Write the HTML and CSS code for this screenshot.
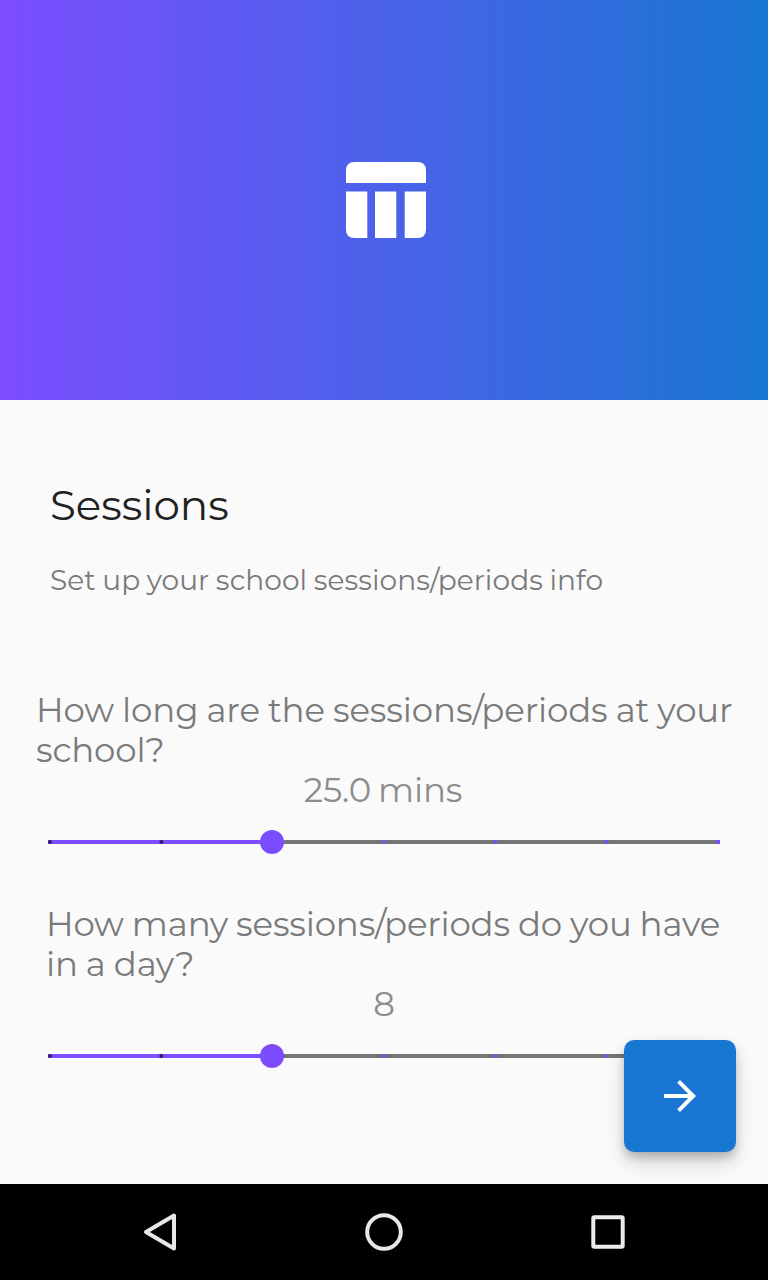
FILE: index.html
```html
<!DOCTYPE html>
<html lang="en">
<head>
<meta charset="utf-8">
<title>Sessions</title>
<link rel="stylesheet" href="styles.css">
</head>
<body>
<div class="screen">
  <header class="hero">
    <svg class="hero-icon" width="80" height="76" viewBox="0 0 80 76" fill="#fff">
      <path d="M8.500 0H71.500Q80 0 80 8.500V21H0V8.500Q0 0 8.500 0Z"/>
      <path d="M0 29.500H21.300V76H8.500Q0 76 0 67.500Z"/>
      <path d="M29 29.500H50.300V76H29Z"/>
      <path d="M58.700 29.500H80V67.500Q80 76 71.500 76H58.700Z"/>
    </svg>
  </header>
  <main class="content">
    <h1 class="title">Sessions</h1>
    <p class="subtitle">Set up your school sessions/periods info</p>
    <section class="question question-length">
      <p class="prompt">How long are the sessions/periods at your<br>school?</p>
      <p class="value value-length">25.0 mins</p>
      <svg class="slider" width="672" height="24" viewBox="0 0 672 24">
        <path fill="#757575" d="M224 10H672V14H224Z"/><path fill="#7c4dff" d="M0 10H224V14H0Z"/>
        <g fill="#311f66"><circle cx="2" cy="12" r="2"/><circle cx="113.300" cy="12" r="2"/></g>
        <g fill="#7c4dff"><circle cx="224" cy="12" r="12"/><circle cx="336" cy="12" r="2"/><circle cx="447.300" cy="12" r="2"/><circle cx="558.600" cy="12" r="2"/><path d="M668 10H672V14H668Z"/></g>
      </svg>
    </section>
    <section class="question question-count">
      <p class="prompt">How many sessions/periods do you have<br>in a day?</p>
      <p class="value">8</p>
      <svg class="slider" width="672" height="24" viewBox="0 0 672 24">
        <path fill="#757575" d="M224 10H672V14H224Z"/><path fill="#7c4dff" d="M0 10H224V14H0Z"/>
        <g fill="#311f66"><circle cx="2" cy="12" r="2"/><circle cx="113.300" cy="12" r="2"/></g>
        <g fill="#7c4dff"><circle cx="224" cy="12" r="12"/><circle cx="336" cy="12" r="2"/><circle cx="447.300" cy="12" r="2"/><circle cx="558.600" cy="12" r="2"/><path d="M668 10H672V14H668Z"/></g>
      </svg>
    </section>
    <button class="fab" aria-label="Next">
      <svg width="48" height="48" viewBox="0 0 24 24" fill="#fff"><path d="M12 4l-1.410 1.410L16.170 11H4v2h12.170l-5.580 5.590L12 20l8-8z"/></svg>
    </button>
  </main>
  <nav class="navbar">
    <svg width="40" height="40" viewBox="0 0 40 40" fill="none" stroke="#e8e8e8" stroke-width="4" stroke-linejoin="round"><path d="M34 3.500V36.500L6 20Z"/></svg>
    <svg width="40" height="40" viewBox="0 0 40 40" fill="none" stroke="#e8e8e8" stroke-width="4"><circle cx="20" cy="20" r="16.800"/></svg>
    <svg width="40" height="40" viewBox="0 0 40 40" fill="none" stroke="#ececec" stroke-width="4"><rect x="5.300" y="5.300" width="29.400" height="29.400" rx="1"/></svg>
  </nav>
</div>
</body>
</html>
```
FILE: styles.css
```css
* { box-sizing: border-box; }
body, h1, p { margin: 0; }
body { background: #fafafa; }
.screen {
  width: 768px;
  height: 1280px;
  display: flex;
  flex-direction: column;
  overflow: hidden;
  font-family: Montserrat, Inter, sans-serif;
  font-weight: 400;
  color: #7a7a7a;
}
.hero {
  height: 400px;
  padding: 162px 0 0 346px;
  background: linear-gradient(90deg, #7c4dff, #1976d2);
}
.hero-icon, .slider { display: block; }
.content {
  position: relative;
  height: 784px;
  padding-top: 79px;
  white-space: nowrap;
}
.title { padding-left: 50px; font-size: 42px; line-height: 52px; font-weight: 400; color: #212121; }
.subtitle { padding-left: 50px; margin-top: 31px; font-size: 28px; line-height: 36px; word-spacing: -1px; letter-spacing: .1px; }
.question { font-size: 34px; line-height: 40px; word-spacing: -.7px; letter-spacing: -.12px; }
.question-length { margin-top: 92px; }
.question-count { margin-top: 50px; }
.question-length .prompt { padding-left: 36px; }
.question-count .prompt { padding-left: 46px; letter-spacing: -.17px; }
.value { text-align: center; color: #8c8c8c; }
.value-length { padding-right: 2px; word-spacing: -2px; }
.slider { margin: 20px 0 0 48px; }
.fab {
  position: absolute;
  right: 32px;
  bottom: 32px;
  width: 112px;
  height: 112px;
  padding: 0;
  border: 0;
  border-radius: 10px;
  background: #1976d2;
  display: grid;
  place-items: center;
  box-shadow: 0 6px 10px -2px rgba(0,0,0,.2), 0 12px 20px rgba(0,0,0,.14), 0 2px 14px rgba(0,0,0,.06);
}
.navbar {
  height: 96px;
  padding: 0 140px;
  display: flex;
  align-items: center;
  justify-content: space-between;
  background: #000;
}
```
